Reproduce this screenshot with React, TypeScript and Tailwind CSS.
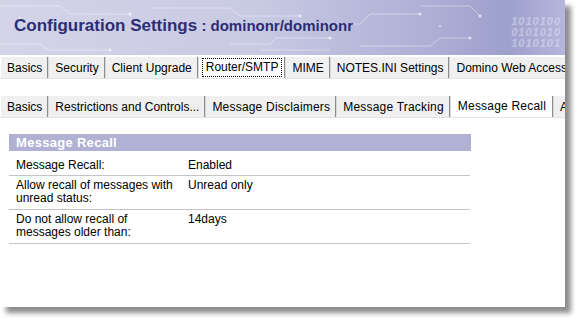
import { Fragment } from 'react';

const TOP_TABS = ['Basics', 'Security', 'Client Upgrade', 'Router/SMTP', 'MIME', 'NOTES.INI Settings', 'Domino Web Access'];
const SUB_TABS = ['Basics', 'Restrictions and Controls...', 'Message Disclaimers', 'Message Tracking', 'Message Recall', 'Advanced'];

const ROWS = [
  { label: 'Message Recall:', value: 'Enabled' },
  { label: 'Allow recall of messages with unread status:', value: 'Unread only' },
  { label: 'Do not allow recall of messages older than:', value: '14days' },
];

function Separator() {
  return (
    <div className="flex h-full shrink-0">
      <div className="w-px h-full bg-[#8c8c8c]" />
      <div className="w-px h-full bg-[#d8d8d8]" />
    </div>
  );
}

// tab strip like the old Notes web admin
function TabRow({ tabs, active, focus, wideFrom = 99 }: { tabs: string[]; active: string; focus?: boolean; wideFrom?: number }) {
  return (
    <div className="flex h-[22px] overflow-hidden border-b border-[#e4e4e4] whitespace-nowrap">
      {tabs.map((t, i) => (
        <Fragment key={t}>
          {i > 0 && <Separator />}
          {t === active ? (
            <div className={`flex items-center h-full pl-[3px] pr-[2px] bg-white shrink-0 ${i >= wideFrom ? 'tracking-[0.2px]' : ''}`}>
              <span className={`px-[3px] leading-[17px] ${focus ? 'border border-dotted border-black' : 'border border-transparent'}`}>{t}</span>
            </div>
          ) : (
            <div className={`flex items-center h-full pl-[6px] pr-[5px] bg-[#f0f0f0] shrink-0 ${i === 0 ? 'ml-px' : ''} ${i >= wideFrom ? 'tracking-[0.2px]' : ''}`}>
              {t}
            </div>
          )}
        </Fragment>
      ))}
    </div>
  );
}

function HeaderArt() {
  return (
    <svg className="absolute inset-0 w-full h-full" viewBox="0 0 565 55" preserveAspectRatio="none">
      <g stroke="#ffffff" strokeOpacity="0.4" strokeWidth="1" fill="none">
        <path d="M0 6 H60 L70 14 H130" />
        <path d="M0 44 H40 L48 50 H110" />
        <path d="M150 8 H230 L240 16 H300" />
        <path d="M230 44 H270 L276 38 H330" />
        <path d="M300 24 H360 L370 14 H420" />
        <path d="M360 46 H430 L440 38 H470" />
        <path d="M420 6 H470 L480 16" />
        <path d="M260 50 H330" />
      </g>
      <g fill="#ffffff" fillOpacity="0.65">
        <circle cx="130" cy="14" r="1.5" />
        <circle cx="110" cy="50" r="1.5" />
        <circle cx="300" cy="16" r="1.5" />
        <circle cx="330" cy="38" r="1.5" />
        <circle cx="420" cy="14" r="1.5" />
        <circle cx="470" cy="38" r="1.5" />
        <circle cx="480" cy="16" r="1.5" />
        <circle cx="20" cy="18" r="1" />
        <circle cx="440" cy="26" r="1" />
      </g>
    </svg>
  );
}

export default function App() {
  return (
    <div className="w-[581px] h-[323px] bg-white font-['Liberation_Sans',Arial,sans-serif] text-[12px] text-black">
      <div className="w-[565px] h-[307px] bg-white shadow-[6px_6px_5px_rgba(0,0,0,0.45)] flex flex-col">
        {/* banner */}
        <div className="relative h-[55px] shrink-0 overflow-hidden bg-[linear-gradient(90deg,#d3d4e8_0%,#c9cae3_45%,#aeb0d6_75%,#9ea0cd_90%,#b4b6dc_100%)]">
          <HeaderArt />
          <div className="absolute right-[4px] top-[16px] text-[11px] font-bold italic tracking-[1px] text-[#e4e5f3]/50 leading-[11px] text-right">
            <div>1010100</div>
            <div>0101010</div>
            <div>1010101</div>
          </div>
          <h1 className="relative pl-[14px] pt-[16px] text-[17px] leading-[20px] font-bold text-[#2c2d76] whitespace-nowrap">
            Configuration Settings<span className="text-[15px]"> : dominonr/dominonr</span>
          </h1>
        </div>

        <div className="mt-[2px]">
          <TabRow tabs={TOP_TABS} active="Router/SMTP" focus />
        </div>
        <div className="mt-[17px]">
          <TabRow tabs={SUB_TABS} active="Message Recall" wideFrom={2} />
        </div>

        <section className="ml-[9px] mt-[16px] w-[462px]">
          <div className="h-[17px] bg-[#b0b1d3] pl-[7px] text-[13px] leading-[17px] font-bold text-white tracking-[0.3px]">
            Message Recall
          </div>
          <div className="mt-px">
            {ROWS.map((r, i) => (
              <div key={r.label} className={`flex px-[7px] border-b border-[#c4c4c4] mr-px ${i === 0 ? 'pt-[7px] pb-[3px]' : 'pt-[3px] pb-[4px]'}`}>
                <div className="w-[172px] pr-[8px] leading-[13px]">{r.label}</div>
                <div className="leading-[13px]">{r.value}</div>
              </div>
            ))}
          </div>
        </section>
      </div>
    </div>
  );
}
